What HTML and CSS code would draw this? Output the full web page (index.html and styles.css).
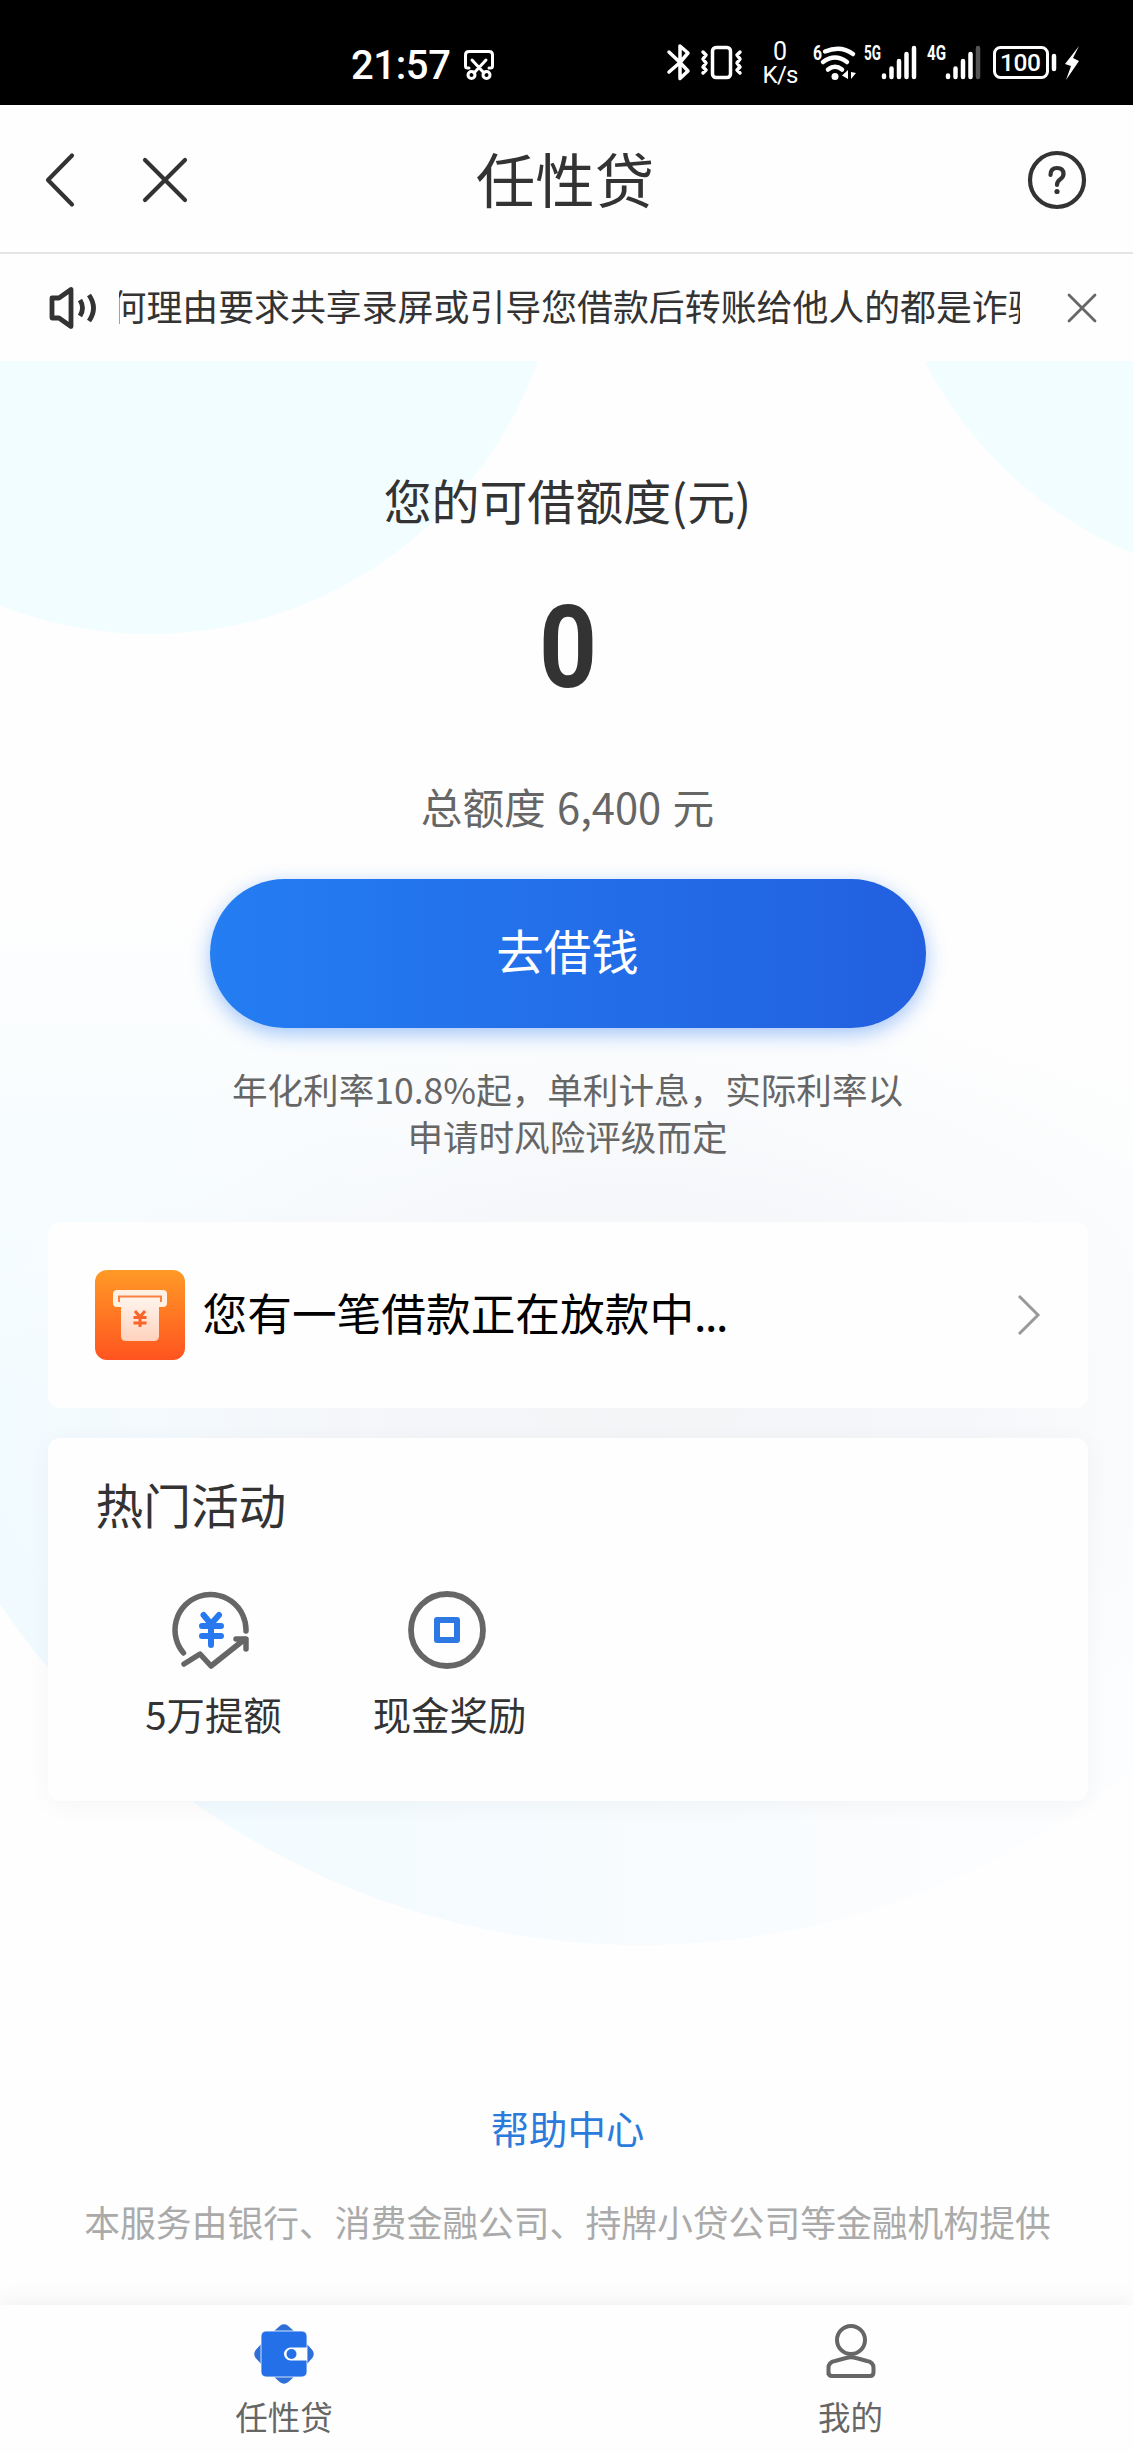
FILE: index.html
```html
<!DOCTYPE html>
<html lang="zh-CN">
<head>
<meta charset="utf-8">
<title>任性贷</title>
<link rel="stylesheet" href="styles.css">
</head>
<body>
<div class="status">
  <span class="clock">21:57</span>
  <svg class="scissors" width="32" height="32" viewBox="0 0 32 32" fill="none" stroke="#fff" stroke-width="3"><path d="M6 19H4.500Q2.500 19 2.500 17V6Q2.500 2.500 6 2.500H26Q29.500 2.500 29.500 6V17Q29.500 19 27.500 19H26M9 11L21 24M23 11L11 24" stroke-linecap="round"/><circle cx="8.500" cy="26" r="3.500"/><circle cx="23.500" cy="26" r="3.500"/></svg>
  <svg class="status-icons" width="420" height="50" viewBox="0 0 420 50" fill="none" stroke="#fff" stroke-width="3" stroke-linecap="round" stroke-linejoin="round">
    <path d="M5 13L16 23.500L24 14L16 7V23.500L5 33M16 23.500L24 32L16 39.500V27" stroke-width="3.500"/>
    <rect x="48.500" y="8.500" width="18" height="30" rx="3.500" stroke-width="3.500"/>
    <path d="M39 13L42 16L39 20L42 24L39 28L42 31L39 34M76 13L73 16L76 20L73 24L76 28L73 31L76 34" stroke-width="3.500"/>
    <path d="M161 12.500Q177 6 189 15M159 23Q171 14 183 23M164 30.500Q171 25 178 30.500" stroke-width="4.500"/>
    <circle cx="171" cy="37.500" r="3.500" fill="#fff" stroke="none"/>
    <path d="M184 31V40L178 36.500ZM187 33V40L192 34Z" fill="#fff" stroke="none"/>
    <path d="M220 36.500V38M227.500 29.500V38M235 22V38M242.500 15V38M250 9V38M284 36.500V38M291.500 29.500V38M299 22V38M306.500 15V38" stroke-width="4.500"/>
    <path d="M314 9V38" stroke="#555" stroke-width="4.500"/>
    <rect x="330.500" y="8.500" width="53" height="30" rx="6"/>
    <path d="M390 17V30" stroke-width="4.500"/>
    <path d="M415 7L401 25L407 27L402 41L415 22L409 19Z" fill="#fff" stroke="none"/>
    <g class="status-text">
      <text x="116" y="21" font-size="25" text-anchor="middle">0</text>
      <text x="116.500" y="43.500" font-size="24" text-anchor="middle" textLength="36">K/s</text>
      <text x="149" y="21" font-size="20" font-weight="700" textLength="9" lengthAdjust="spacingAndGlyphs">6</text>
      <text x="200" y="21" font-size="20" font-weight="700" textLength="17" lengthAdjust="spacingAndGlyphs">5G</text>
      <text x="263" y="21" font-size="20" font-weight="700" textLength="19" lengthAdjust="spacingAndGlyphs">4G</text>
      <text x="356.500" y="32" font-size="24.500" font-weight="500" text-anchor="middle" textLength="41">100</text>
    </g>
  </svg>
</div>
<header class="nav">
  <svg class="back" width="30" height="56" viewBox="0 0 30 56"><path d="M27 3.500L3 28L27 52.500"/></svg>
  <svg class="close" width="46" height="46" viewBox="0 0 46 46"><path d="M3 3L43 43M43 3L3 43"/></svg>
  <h1>任性贷</h1>
  <svg class="help" width="60" height="60" viewBox="0 0 60 60"><circle cx="30" cy="30" r="27"/><path d="M23.500 25Q23.500 18 30 18Q36.500 18 36.500 24Q36.500 27 33 29.500Q30 31.500 30 35"/><circle class="dot" cx="30" cy="41.500" r="2.600"/></svg>
</header>
<div class="notice">
  <svg class="speaker" width="52" height="46" viewBox="0 0 52 46"><path d="M4 13H11L23 4.500V41.500L11 33H4Z"/><path d="M32 15Q37 23 32 31M41 10Q50 23 41 36"/></svg>
  <div class="marquee"><span>何理由要求共享录屏或引导您借款后转账给他人的都是诈骗</span></div>
  <svg class="dismiss" width="30" height="30" viewBox="0 0 30 30"><path d="M2 2L28 28M28 2L2 28"/></svg>
</div>
<main>
  <svg class="backdrop" viewBox="0 361 1133 1944" preserveAspectRatio="none">
    <defs>
      <linearGradient id="tint" gradientUnits="userSpaceOnUse" x1="150" y1="1640" x2="980" y2="1640"><stop offset="0" stop-color="#f1fbff"/><stop offset=".3" stop-color="#f4fbff"/><stop offset=".55" stop-color="#f7fbfe"/><stop offset="1" stop-color="#fcfdfe"/></linearGradient>
      <radialGradient id="haze" gradientUnits="userSpaceOnUse" cx="0" cy="0" r="1" gradientTransform="translate(640 1400) scale(680 420)"><stop offset="0" stop-color="#f4f5f7"/><stop offset=".5" stop-color="#f5f6f9" stop-opacity=".8"/><stop offset="1" stop-color="#f9fafc" stop-opacity="0"/></radialGradient>
      <linearGradient id="fade" gradientUnits="userSpaceOnUse" x1="0" y1="900" x2="0" y2="1400"><stop offset="0" stop-color="#fefefe"/><stop offset="1" stop-color="#fefefe" stop-opacity="0"/></linearGradient>
    </defs>
    <circle cx="641" cy="1172" r="773" fill="url(#tint)"/>
    <rect x="0" y="361" width="1133" height="540" fill="#fefefe"/>
    <rect x="0" y="900" width="1133" height="500" fill="url(#fade)"/>
    <rect x="0" y="900" width="1133" height="890" fill="url(#haze)"/>
    <circle cx="150" cy="222" r="412" fill="#f2fdff"/>
    <circle cx="1289" cy="175" r="409" fill="#f2fdff"/>
  </svg>
  <section class="quota">
    <h2>您的可借额度(元)</h2>
    <div class="amount">0</div>
    <p class="total">总额度 6,400 元</p>
    <a class="borrow">去借钱</a>
    <p class="rate">年化利率10.8%起，单利计息，实际利率以<br>申请时风险评级而定</p>
  </section>
  <section class="card loan">
    <svg width="90" height="90" viewBox="0 0 90 90">
      <defs><linearGradient id="or" x1="0" y1="0" x2="0" y2="1"><stop offset="0" stop-color="#ff9a26"/><stop offset="1" stop-color="#ff5420"/></linearGradient><linearGradient id="pk" x1="0" y1="0" x2="0" y2="1"><stop offset="0" stop-color="#fff4ec"/><stop offset="1" stop-color="#ffd2bd"/></linearGradient></defs>
      <rect width="90" height="90" rx="12" fill="url(#or)"/>
      <rect x="18" y="20" width="54" height="17" rx="4" fill="#fff0e4"/>
      <path d="M24 32V26.500H66V32" fill="none" stroke="#f98040" stroke-width="2"/>
      <path d="M26 28H64V66Q64 71 59 71H31Q26 71 26 66Z" fill="url(#pk)"/>
      <path d="M40 41L45 47L50 41M45 47V57M38.500 47.500H51.500M38.500 53H51.500" fill="none" stroke="#fa6428" stroke-width="3"/>
    </svg>
    <span class="message">您有一笔借款正在放款中<span class="dots">...</span></span>
    <svg class="go" width="24" height="42" viewBox="0 0 24 42"><path d="M2 2L21 21L2 40"/></svg>
  </section>
  <section class="card hot">
    <h3>热门活动</h3>
    <div class="activities">
      <div class="activity">
        <svg width="78" height="78" viewBox="0 0 78 78"><path d="M11.500 62A35.500 35.500 0 1 1 74 40M12 73L28 63L39 75L73 48M64 48H74V58" stroke="#666" stroke-width="5.500"/><path d="M31.500 24L39 33L47 24M39 33V54M30 35H49M30 45H49" stroke="#2879f0" stroke-width="6"/></svg>
        <span>5万提额</span>
      </div>
      <div class="activity">
        <svg width="78" height="78" viewBox="0 0 78 78"><circle cx="39" cy="39" r="36" stroke="#666" stroke-width="5.800"/><rect x="29" y="29" width="20" height="20" stroke="#2e78e4" stroke-width="6"/></svg>
        <span>现金奖励</span>
      </div>
    </div>
  </section>
  <footer>
    <a>帮助中心</a>
    <p>本服务由银行、消费金融公司、持牌小贷公司等金融机构提供</p>
  </footer>
</main>
<nav class="tabs">
  <div class="tab">
    <svg width="60" height="60" viewBox="0 0 60 60"><path d="M19 8L26 1.700Q30 -1.200 34 1.700L41 8ZM19 52L26 58.300Q30 61.200 34 58.300L41 52ZM8 19L1.700 26Q-1.200 30 1.700 34L8 41ZM52 19L58.300 26Q61.200 30 58.300 34L52 41Z" fill="#2e6fd8"/><rect x="7" y="7" width="46" height="46" rx="5" fill="#2470e8" stroke="#fff" stroke-width=".8"/><path d="M53 23.500H36.500A6.500 6.500 0 0 0 36.500 36.500H53Z" fill="#fff"/><circle cx="37.500" cy="30" r="5" fill="#2470e8"/></svg>
    <span>任性贷</span>
  </div>
  <div class="tab">
    <svg width="60" height="60" viewBox="0 0 60 60" fill="none" stroke="#666" stroke-width="4"><circle cx="30" cy="16" r="14"/><path d="M7.500 51V44Q7.500 38 14 37L25 34Q30 32.500 35 34L46 37Q52.500 38 52.500 44V48Q52.500 52 49 52H11Q7.500 52 7.500 48"/></svg>
    <span>我的</span>
  </div>
</nav>
</body>
</html>
```

FILE: styles.css
```css
* { box-sizing: border-box; margin: 0; padding: 0; }
body { width: 1133px; height: 2453px; display: flex; flex-direction: column; overflow: hidden; background: #fefefe; color: #333; font-family: "Noto Sans CJK SC", sans-serif; font-weight: 400; }
h1, h2, h3 { font-weight: 400; }
svg { display: block; flex: none; }

.status { height: 105px; flex: none; background: #000; color: #fff; display: flex; align-items: flex-start; padding: 36px 0 0 351px; }
.clock { width: 112px; font: 500 40px/60px Roboto, sans-serif; letter-spacing: -.4px; }
.scissors { margin-top: 13px; }
.status-icons { margin: 3px 0 0 169px; }
.status-text { fill: #fff; stroke: none; font-family: Roboto, sans-serif; }

.nav { height: 149px; flex: none; display: grid; grid-template-columns: 97px 46px 1fr 103px; align-items: center; padding: 2px 0 0 45px; border-bottom: 2px solid #e4e4e4; background: #fefefe; }
.nav svg { fill: none; stroke: #333; stroke-width: 4.200; stroke-linecap: round; stroke-linejoin: round; }
.nav h1 { text-align: center; font-size: 59.500px; line-height: 80px; padding-right: 88px; margin-top: -5px; }
.nav .help { justify-self: end; margin-right: 46px; }
.nav .help .dot { fill: #333; stroke: none; }

.notice { height: 107px; flex: none; display: flex; align-items: center; padding: 0 36px 0 48px; }
.speaker { fill: none; stroke: #333; stroke-width: 4.800; stroke-linejoin: round; }
.marquee { width: 901px; margin: -5px 0 0 19px; overflow: hidden; white-space: nowrap; font-size: 35.900px; line-height: 54px; }
.marquee span { margin-left: -8.500px; }
.dismiss { margin-left: auto; fill: none; stroke: #666; stroke-width: 2.800; stroke-linecap: round; }

main { position: relative; height: 1944px; flex: none; display: flex; flex-direction: column; align-items: center; padding-left: 2px; z-index: 0; }
.backdrop { position: absolute; inset: 0; width: 100%; height: 100%; z-index: -1; }

.quota { height: 861px; display: flex; flex-direction: column; align-items: center; padding-top: 102px; }
.quota h2 { font-size: 47.900px; line-height: 72px; }
.amount { margin-top: 43px; height: 140px; font: 700 115px/140px Roboto, sans-serif; transform: scaleX(.88); }
.total { margin-top: 58px; font-size: 41.700px; line-height: 60px; color: #666; word-spacing: 2px; }
.borrow { margin-top: 43px; width: 716px; height: 149px; border-radius: 75px; background: linear-gradient(90deg, #247df2, #2260e0); box-shadow: 0 6px 20px rgba(36, 120, 240, .42); color: #fff; font-size: 47.500px; line-height: 142px; text-align: center; }
.rate { margin-top: 37px; font-size: 35.600px; line-height: 47px; color: #666; text-align: center; }

.card { width: 1040px; background: #fefefe; border-radius: 12px; box-shadow: 0 4px 26px rgba(0, 0, 0, .04); }
.loan { height: 186px; display: flex; align-items: center; padding: 0 47px; color: #000; font-size: 44.700px; box-shadow: none; }
.message { margin: -6px auto 0 18px; line-height: 66px; }
.dots { letter-spacing: -1.500px; }
.go { fill: none; stroke: #999; stroke-width: 3; }
.hot { margin-top: 30px; height: 363px; padding: 30px 48px; }
.hot h3 { font-size: 47.700px; line-height: 72px; }
.activities { display: flex; margin-top: 51px; }
.activity { width: 236px; display: flex; flex-direction: column; align-items: center; font-size: 38.400px; }
.activity svg { margin-left: -5px; fill: none; stroke-linecap: round; stroke-linejoin: round; }
.activity span { margin-top: 15px; line-height: 58px; }

footer { margin-top: 297px; text-align: center; }
footer a { display: block; color: #2b7bdc; font-size: 38.400px; line-height: 58px; }
footer p { margin-top: 38px; color: #aaa; font-size: 35.800px; line-height: 54px; }

.tabs { position: relative; z-index: 1; flex: 1; display: grid; grid-template-columns: 568px 1fr; background: #fefefe; box-shadow: 0 -4px 22px rgba(0, 0, 0, .06); }
.tab { display: flex; flex-direction: column; align-items: center; padding-top: 19px; color: #666; font-size: 32.500px; }
.tab span { margin-top: 8px; line-height: 48px; }
```
